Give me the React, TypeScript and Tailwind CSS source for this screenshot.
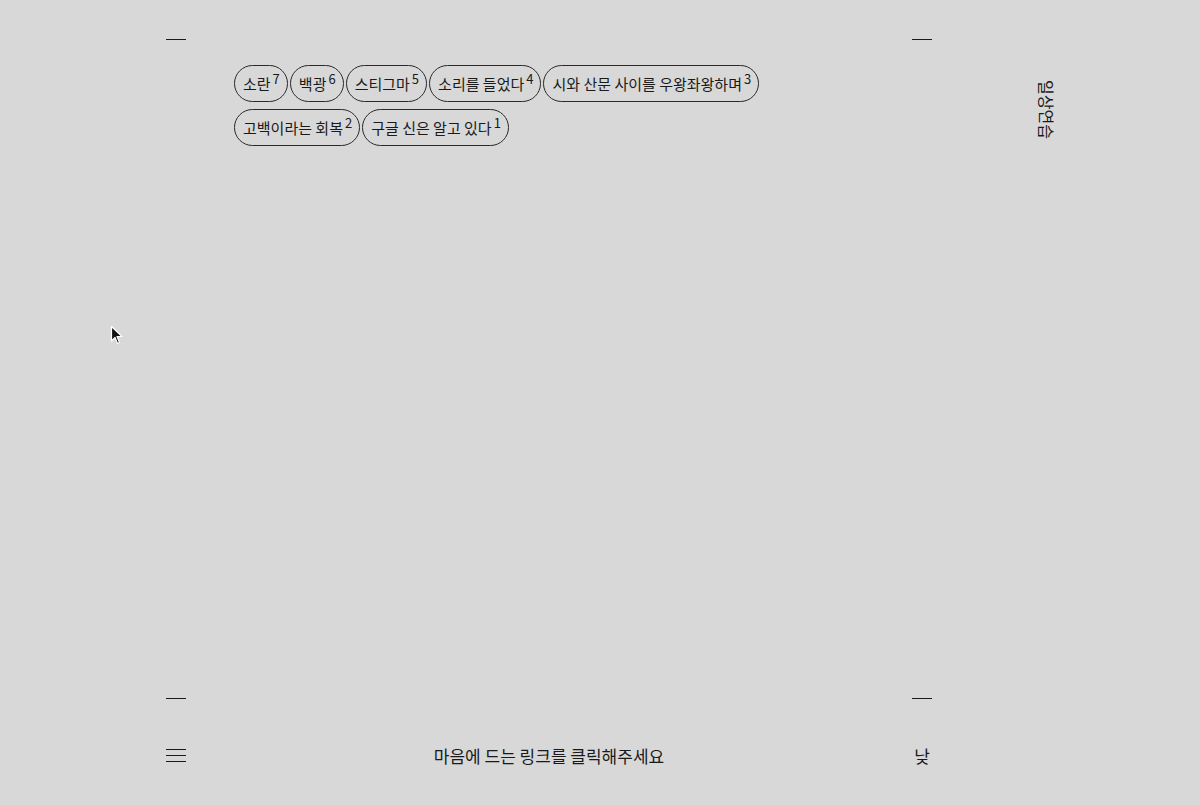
import React from "react";

const pills1 = [
  ["소란", "7"],
  ["백광", "6"],
  ["스티그마", "5"],
  ["소리를 들었다", "4"],
  ["시와 산문 사이를 우왕좌왕하며", "3"],
];
const pills2 = [
  ["고백이라는 회복", "2"],
  ["구글 신은 알고 있다", "1"],
];

const font = { fontFamily: '"Noto Sans CJK KR", "Noto Sans", sans-serif' };

function Pill({ t, n }: { t: string; n: string }) {
  return (
    <div className="flex h-[37px] items-center rounded-full border border-[#2a2a2a] pl-[8px] pr-[7px] text-[15px] text-[#1a1a1a]">
      <span className="leading-none">{t}</span>
      <span className="relative -top-[5px] ml-[2px] text-[13px] leading-none">{n}</span>
    </div>
  );
}

function Dash() {
  return <div className="h-px w-[20px] bg-[#1a1a1a]" />;
}

export default function App() {
  return (
    <div className="relative flex h-[805px] w-[1200px] bg-[#d8d8d8] text-[#1a1a1a]" style={font}>
      <div className="ml-[166px] flex w-[766px] flex-col">
        <div className="mt-[39px] flex justify-between">
          <Dash />
          <Dash />
        </div>
        <div className="ml-[68px] mt-[25px] flex flex-col gap-[7px]">
          <div className="flex gap-[2px]">
            {pills1.map(([t, n]) => (
              <Pill key={t} t={t} n={n} />
            ))}
          </div>
          <div className="flex gap-[2px]">
            {pills2.map(([t, n]) => (
              <Pill key={t} t={t} n={n} />
            ))}
          </div>
        </div>
        <div className="flex-1" />
        <div className="flex justify-between">
          <Dash />
          <Dash />
        </div>
        <div className="mb-[38px] mt-[44px] flex h-[24px] items-center justify-between">
          <div className="flex flex-col gap-[5px]">
            <Dash />
            <Dash />
            <Dash />
          </div>
          <div className="text-[17px] leading-none">마음에 드는 링크를 클릭해주세요</div>
          <div className="flex w-[20px] justify-center text-[17px] leading-none">낮</div>
        </div>
      </div>
      <div className="ml-[105px] mt-[80px] h-[62px] w-[20px]">
        <div className="origin-top-left translate-x-[20px] rotate-90 whitespace-nowrap text-[16px] leading-[20px]">
          일상연습
        </div>
      </div>
      <svg className="absolute left-[110px] top-[325px]" width="14" height="21" viewBox="0 0 14 21">
        <path d="M1.5 1.5 L1.5 16 L5 12.5 L7.5 18.5 L9.5 17.5 L7 11.5 L12 11.5 Z" fill="#111" stroke="#fff" strokeWidth="1.2" strokeLinejoin="round" />
      </svg>
    </div>
  );
}
